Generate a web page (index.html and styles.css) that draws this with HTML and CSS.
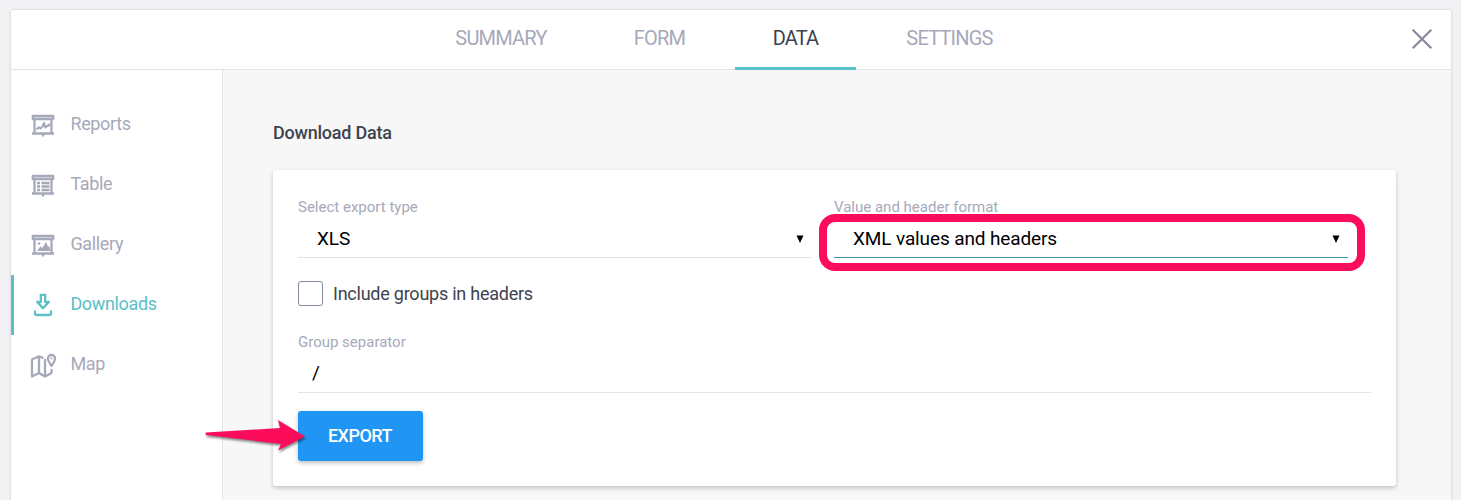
FILE: index.html
```html
<!DOCTYPE html>
<html lang="en">
<head>
<meta charset="utf-8">
<title>Download Data</title>
<link rel="stylesheet" href="styles.css">
</head>
<body>
<div class="window">
  <header class="topbar">
    <nav class="tabs">
      <a class="tab tab-summary">SUMMARY</a>
      <a class="tab tab-form">FORM</a>
      <a class="tab tab-data active">DATA</a>
      <a class="tab tab-settings">SETTINGS</a>
    </nav>
    <svg class="close" width="22" height="22" viewBox="0 0 22 22"><path d="M1.7 1.7 20.3 20.3M20.3 1.7 1.7 20.3"/></svg>
  </header>
  <div class="body">
    <aside class="sidebar">
      <a class="side-item">
        <svg class="icon" viewBox="0 0 28 28"><path d="M3.800 5h20.400v3h-20.400zM5.500 8v14M22.500 8v14M3 22.500h22M14 22v3.500"/><path class="thin" d="M7.500 18.500l2.300-2.300 1.700 1.300 2-2 1.500-3.700 1.300 4.700 2.200-2 1 .5 1.500-2.500"/></svg>
        <span>Reports</span>
      </a>
      <a class="side-item">
        <svg class="icon" viewBox="0 0 28 28"><path d="M3.800 5h20.400v3h-20.400zM5.500 8v14M22.500 8v14M3 22.500h22M14 22v3.500"/><path d="M8 12h3M12.500 12h8M8 15.500h3M12.500 15.500h8M8 19h3M12.500 19h8"/></svg>
        <span>Table</span>
      </a>
      <a class="side-item">
        <svg class="icon" viewBox="0 0 28 28"><path d="M3.800 5h20.400v3h-20.400zM5.500 8v14M22.500 8v14M3 22.500h22M14 22v3.500"/><path class="solid" d="M8 20l3.300-4.500 2 1.500 3.700-6 2 4.500 1-.5 1.500 5z"/><circle class="solid" cx="10" cy="12.500" r="1.300"/></svg>
        <span>Gallery</span>
      </a>
      <a class="side-item active">
        <svg class="icon icon-download" viewBox="0 0 28 28"><path d="M11.800 3.800h4.400v7.200h3.600L14 17.200 8.200 11h3.600zM6 20.500v2q0 1.500 2 1.500h12q2 0 2-1.500v-2"/></svg>
        <span>Downloads</span>
      </a>
      <a class="side-item">
        <svg class="icon" viewBox="0 0 28 28"><path d="M14.500 7.300 10 5.300 3 8.500V25.500l7-3.500 6 3.500 6.500-3.500v-4M10 5.300v16.700M16 8v17.500"/><path d="M22.500 14.800c-2-3-3.600-4.800-3.600-7.200a3.600 3.600 0 0 1 7.200 0c0 2.400-1.600 4.200-3.600 7.200z"/><circle class="solid" cx="22.500" cy="7.600" r="1"/></svg>
        <span>Map</span>
      </a>
    </aside>
    <main class="content">
      <h1 class="title">Download Data</h1>
      <section class="card">
        <div class="row">
          <label class="field">
            <span class="label">Select export type</span>
            <span class="select"><span>XLS</span><svg class="caret" width="8" height="8" viewBox="0 0 8 8"><path d="M.5 .5h7L4 8z"/></svg></span>
          </label>
          <label class="field focused">
            <span class="label">Value and header format</span>
            <span class="select"><span>XML values and headers</span><svg class="caret" width="8" height="8" viewBox="0 0 8 8"><path d="M.5 .5h7L4 8z"/></svg></span>
            <span class="highlight"></span>
          </label>
        </div>
        <label class="check"><span class="box"></span><span>Include groups in headers</span></label>
        <label class="separator"><span class="label">Group separator</span><span class="input">/</span></label>
        <div class="actions">
          <button class="export">EXPORT</button>
          <svg class="arrow" width="106" height="40" viewBox="0 0 106 40"><path d="M2 14.500 76 10 74 2 101 18.500 74 32.500 77 26 2 17q-1-1.300 0-2.500z"/></svg>
        </div>
      </section>
    </main>
  </div>
</div>
</body>
</html>
```
FILE: styles.css
```css
* { box-sizing: border-box; }
body { margin: 0; height: 500px; overflow: hidden; padding: 10px 10px 0 11px; background: #f2f2f4; font-family: Roboto, sans-serif; color: #3c4350; }
.window { height: 490px; background: #f7f7f7; border-radius: 3px 3px 0 0; box-shadow: 0 0 3px rgba(0,0,0,.18); }
.topbar { display: flex; justify-content: space-between; height: 60px; background: #fff; border-bottom: 1px solid #e3e4e6; border-radius: 3px 3px 0 0; }
.tabs { display: flex; height: 60px; padding-left: 407px; gap: 12px; font-size: 20px; line-height: 57px; letter-spacing: -.8px; color: #a6a9b9; }
.tab { text-align: center; white-space: nowrap; }
.tab-summary { width: 166px; }
.tab-form { width: 127px; }
.tab-data { width: 121px; }
.tab-settings { width: 163px; }
.tab.active { color: #3c4150; border-bottom: 3px solid #5bc0c8; }
.close { margin: 18px 18px 0 0; fill: none; stroke: #858b9c; stroke-width: 2.2; }
.body { display: flex; height: 430px; }
.sidebar { width: 212px; padding-top: 25px; background: #fff; border-right: 1px solid #e6e6e8; }
.side-item { display: flex; align-items: center; height: 60px; padding-left: 18px; gap: 13.400px; color: #a6a9b9; font-size: 18px; line-height: 56px; letter-spacing: -.35px; }
.side-item span { padding-bottom: 2px; }
.side-item.active { border-left: 3px solid #5bc0c8; padding-left: 15px; color: #5bc0c8; }
.icon { width: 28px; height: 28px; fill: none; stroke: currentColor; stroke-width: 2.3; stroke-linejoin: round; }
.icon-download { stroke-linecap: round; }
.thin { stroke-width: 2; }
.solid { fill: currentColor; stroke: none; }
.content { flex: 1; padding: 50px 55px 0 50px; }
.title { margin: 0; height: 50px; font-size: 18px; font-weight: 500; line-height: 26px; letter-spacing: -.23px; color: #3c4350; }
.card { height: 316px; padding: 25px; background: #fff; border-radius: 3px; box-shadow: 0 2px 4px rgba(0,0,0,.22); }
.row { display: flex; gap: 22px; }
.field { position: relative; display: block; width: 514px; height: 63px; border-bottom: 1px solid #e3e4e6; }
.field.focused { border-color: #3c91b4; }
.label { display: block; height: 24px; font-size: 15px; line-height: 24px; color: #a6a9b9; }
.select { display: flex; justify-content: space-between; align-items: center; height: 38px; padding: 0 8px 0 19px; font-size: 19px; letter-spacing: -.12px; color: #000; }
.caret { fill: #000; margin-top: 2px; }
.highlight { position: absolute; left: -15px; top: 19px; width: 546px; height: 57px; border: 8px solid #fc0d5b; border-radius: 16px; }
.check { display: flex; align-items: center; gap: 10px; margin-top: 23px; height: 25px; font-size: 18px; letter-spacing: -.24px; }
.box { width: 25px; height: 25px; border: 1px solid #858b9c; border-radius: 3px; }
.separator { display: block; height: 63px; margin-top: 24px; border-bottom: 1px solid #e3e4e6; }
.input { display: block; padding-left: 14px; font-size: 19px; line-height: 38px; color: #000; }
.actions { position: relative; margin-top: 18px; }
.export { display: block; width: 125px; height: 50px; border: 0; border-radius: 3px; padding: 0 1px 1px 0; background: #2095f3; color: #fff; font: 500 18px Roboto, sans-serif; letter-spacing: -.5px; box-shadow: 0 2px 4px rgba(0,0,0,.25); }
.arrow { position: absolute; left: -94px; top: 7px; fill: #fc0d5b; filter: drop-shadow(1px 2px 1px rgba(0,0,0,.45)); }
```
